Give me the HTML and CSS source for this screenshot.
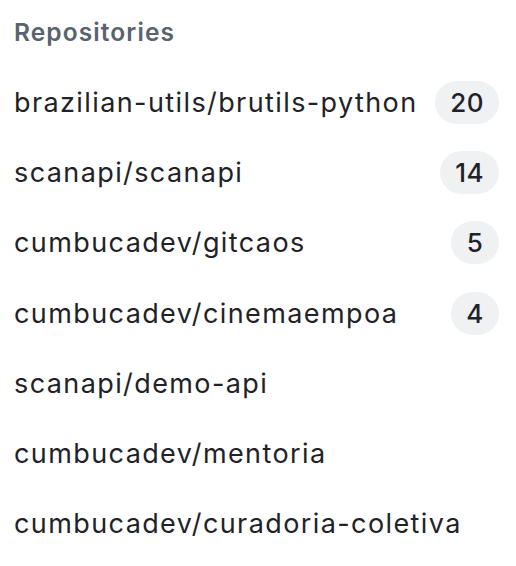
FILE: index.html
```html
<!DOCTYPE html>
<html lang="en">
<head>
<meta charset="utf-8">
<link rel="stylesheet" href="styles.css">
</head>
<body>
<nav class="repos">
  <h2 class="repos-title">Repositories</h2>
  <ul class="repo-list">
    <li class="repo"><a class="repo-name" href="#">brazilian-utils/brutils-python</a><span class="counter">20</span></li>
    <li class="repo"><a class="repo-name" href="#">scanapi/scanapi</a><span class="counter">14</span></li>
    <li class="repo"><a class="repo-name" href="#">cumbucadev/gitcaos</a><span class="counter">5</span></li>
    <li class="repo"><a class="repo-name" href="#">cumbucadev/cinemaempoa</a><span class="counter">4</span></li>
    <li class="repo"><a class="repo-name" href="#">scanapi/demo-api</a></li>
    <li class="repo"><a class="repo-name" href="#">cumbucadev/mentoria</a></li>
    <li class="repo"><a class="repo-name" href="#">cumbucadev/curadoria-coletiva</a></li>
  </ul>
</nav>
</body>
</html>
```
FILE: styles.css
```css
html, body {
  margin: 0;
  padding: 0;
  background: #ffffff;
}
body {
  font-family: Inter, "Noto Sans", sans-serif;
  color: #1f2328;
}
.repos {
  padding: 0 17px 0 14px;
}
.repos-title {
  margin: 0;
  height: 67px;
  display: flex;
  align-items: center;
  font-size: 24.5px;
  font-weight: 600;
  letter-spacing: 1.1px;
  color: #59636e;
  padding-bottom: 3px;
  box-sizing: border-box;
}
.repo-list {
  list-style: none;
  margin: 0;
  padding: 0;
}
.repo {
  height: 70.3px;
  display: flex;
  align-items: center;
  justify-content: space-between;
}
.repo-name {
  font-size: 27px;
  letter-spacing: 1.4px;
  color: #1f2328;
  text-decoration: none;
}
.counter {
  min-width: 48px;
  height: 43px;
  box-sizing: border-box;
  padding: 0 15px;
  border-radius: 22px;
  background: #eff1f3;
  display: inline-flex;
  align-items: center;
  justify-content: center;
  font-size: 26px;
  font-weight: 500;
  letter-spacing: 0.5px;
  color: #1f2328;
}
```
